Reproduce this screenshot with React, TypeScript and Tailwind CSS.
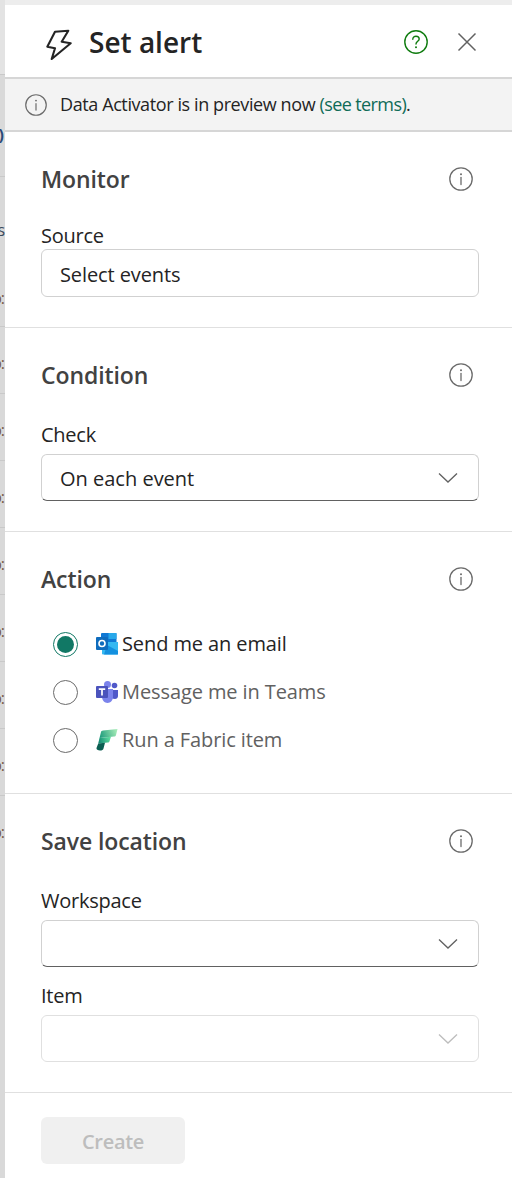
import React from "react";

const font = { fontFamily: '"Open Sans", "Noto Sans", sans-serif' };

function Info({ size = 24, color = "#6b6b6b" }: { size?: number; color?: string }) {
  return (
    <svg width={size} height={size} viewBox="0 0 24 24" fill="none">
      <circle cx="12" cy="12" r="11.2" stroke={color} strokeWidth="1.3" />
      <circle cx="12" cy="7.2" r="1" fill={color} />
      <path d="M12 10.5V17.5" stroke={color} strokeWidth="1.3" strokeLinecap="round" />
    </svg>
  );
}

function Chevron({ color = "#616161" }: { color?: string }) {
  return (
    <svg width="20" height="12" viewBox="0 0 20 12" fill="none">
      <path d="M1 1.5L10 10L19 1.5" stroke={color} strokeWidth="1.3" />
    </svg>
  );
}

function Bolt() {
  return (
    <svg width="28" height="36" viewBox="0 0 28 36" fill="none">
      <path
        d="M10 7.7L23.3 6.7L16.7 17.7L25.7 19.3L6.7 35L10 24.3L2.3 22.7Z"
        stroke="#242424"
        strokeWidth="2.1"
        strokeLinejoin="round"
      />
    </svg>
  );
}

function Outlook() {
  return (
    <svg width="22" height="22" viewBox="0 0 22 22" fill="none">
      <rect x="5" y="0" width="15.5" height="12" rx="1" fill="#0F78D4" />
      <rect x="12.5" y="0" width="8" height="6" fill="#28A8EA" />
      <path d="M6 9H22V20.5C22 21 21.5 21.5 21 21.5H7C6.5 21.5 6 21 6 20.5Z" fill="#35B8F1" />
      <path d="M11 12L22 18V21.5H8Z" fill="#1490DF" />
      <rect x="0" y="4" width="12" height="13" rx="1" fill="#0F6CBD" />
      <circle cx="6" cy="10.5" r="3" stroke="white" strokeWidth="1.6" />
    </svg>
  );
}

function Teams() {
  return (
    <svg width="22" height="22" viewBox="0 0 22 22" fill="none">
      <circle cx="18.5" cy="4.5" r="2.8" fill="#5059C9" />
      <path d="M14 9H22V15C22 17 20.5 18 19 18C16.5 18 14 17 14 15Z" fill="#5059C9" />
      <circle cx="11.5" cy="3.5" r="3.5" fill="#7B83EB" />
      <path d="M6 8H17V16C17 19 14.5 22 11.5 22C8.5 22 6 19 6 16Z" fill="#7B83EB" />
      <rect x="0" y="5" width="12" height="12" rx="1" fill="#4B53BC" />
      <path d="M2.8 8.2H9.2M6 8.2V14.5" stroke="white" strokeWidth="1.7" />
    </svg>
  );
}

function Fabric() {
  return (
    <svg width="22" height="22" viewBox="0 0 22 22" fill="none">
      <defs>
        <linearGradient id="fa" x1="4" y1="8" x2="21" y2="1" gradientUnits="userSpaceOnUse">
          <stop stopColor="#1E9C7C" />
          <stop offset="1" stopColor="#A8EDB8" />
        </linearGradient>
        <linearGradient id="fb" x1="3" y1="13" x2="14" y2="9" gradientUnits="userSpaceOnUse">
          <stop stopColor="#148C74" />
          <stop offset="1" stopColor="#5FDDA0" />
        </linearGradient>
      </defs>
      <path d="M5 3C5.3 2 6 1.6 7 1.5L21.5 0L20 6C19.8 7 19 7.5 18 7.6L3.5 9Z" fill="url(#fa)" />
      <path d="M3.5 9L15 7.7L13.6 12C13.3 13 12.6 13.5 11.6 13.6L2.2 14.5Z" fill="url(#fb)" />
      <path d="M2.2 14.5L9 13.8L7.5 19.5C7.2 21 5.5 21.6 4 21.5C2 21.4 0 20.5 0.5 19Z" fill="#0B5F52" />
    </svg>
  );
}

function Frag() {
  return <span className="mr-[1px] text-[16px] leading-[20px] tracking-[-1px] text-[#7a5a45] whitespace-nowrap">o:</span>;
}

function Strip() {
  return (
    <div className="w-[5px] shrink-0 bg-[#d9d9d9] h-[1178px] overflow-hidden flex flex-col">
      <div className="h-[75px] shrink-0 border-b border-[#c9c9c9] bg-[#e3e3e3]" />
      <div className="h-[102px] shrink-0 border-b border-[#c9c9c9] pt-[50px] flex justify-end">
        <span className="text-[16px] leading-[20px] font-bold text-[#2b4a78] mr-[1px]">)</span>
      </div>
      <div className="h-[150px] shrink-0 border-b border-[#c9c9c9] flex flex-col items-end">
        <span className="mt-[43px] text-[16px] leading-[20px] text-[#3c4a5c]">s</span>
        <span className="mt-[46px]">
          <Frag />
        </span>
      </div>
      {[0, 1, 2, 3, 4, 5, 6].map((i) => (
        <div
          key={i}
          className="h-[67px] shrink-0 border-b border-[#c9c9c9] flex justify-end pt-[26px] overflow-hidden"
        >
          <Frag />
        </div>
      ))}
      <div className="h-[50px] shrink-0 flex justify-end pt-[26px]">
        <Frag />
      </div>
    </div>
  );
}

function SectionHead({ title }: { title: string }) {
  return (
    <div className="flex items-center justify-between h-[24px]">
      <h2 className="text-[23px] leading-[24px] font-semibold text-[#424242] tracking-[-0.1px]">{title}</h2>
      <div className="mr-[6px]">
        <Info />
      </div>
    </div>
  );
}

function Radio({ checked, icon, label }: { checked?: boolean; icon: React.ReactNode; label: string }) {
  return (
    <div className="flex items-center h-[48px] pl-[12px]">
      <div
        className={
          "w-[25px] h-[25px] rounded-full border flex items-center justify-center shrink-0 " +
          (checked ? "border-[#117865]" : "border-[#6b6b6b]")
        }
      >
        {checked && <div className="w-[17px] h-[17px] rounded-full bg-[#117865]" />}
      </div>
      <div className="ml-[18px] w-[22px] h-[22px] shrink-0">{icon}</div>
      <span className={"ml-[4px] text-[20px] tracking-[-0.1px] " + (checked ? "text-[#242424]" : "text-[#616161]")}>
        {label}
      </span>
    </div>
  );
}

function Help() {
  return (
    <svg width="24" height="24" viewBox="0 0 24 24" fill="none">
      <circle cx="12" cy="12" r="11.2" stroke="#107C10" strokeWidth="1.4" />
      <path
        d="M8.8 9.2C8.8 7.4 10.2 6.2 12 6.2C13.8 6.2 15.2 7.4 15.2 9C15.2 11.2 12 11.4 12 14"
        stroke="#107C10"
        strokeWidth="1.4"
        strokeLinecap="round"
      />
      <circle cx="12" cy="17.2" r="1" fill="#107C10" />
    </svg>
  );
}

export default function App() {
  return (
    <div className="w-[512px] h-[1178px] flex overflow-hidden bg-white text-[#242424]" style={font}>
      <Strip />
      <div className="flex-1 min-w-0 flex flex-col">
        <div className="h-[5px] bg-[#ededed]" />
        <header className="h-[72px] flex items-center pl-[40px] pr-[35px] pt-[2px]">
          <Bolt />
          <h1 className="ml-[16px] text-[28px] leading-[36px] font-semibold text-[#242424] flex-1">Set alert</h1>
          <div className="mr-[29px]">
            <Help />
          </div>
          <svg width="20" height="20" viewBox="0 0 20 20" fill="none">
            <path d="M1.5 1.5L18.5 18.5M18.5 1.5L1.5 18.5" stroke="#616161" strokeWidth="1.5" />
          </svg>
        </header>
        <div className="h-[55px] bg-[#f3f3f3] border-y-2 border-t-[#d6d6d6] border-b-[#d6d6d6] flex items-center pl-[20px] text-[18px] tracking-[-0.4px]">
          <Info size={22} />
          <span className="ml-[13px]">
            Data Activator is in preview now{" "}
            <span className="text-[#0e6b57] tracking-[-0.6px]">(see terms)</span>.
          </span>
        </div>

        <section className="h-[196px] border-b border-[#e0e0e0] pl-[36px] pr-[33px] pt-[35px]">
          <SectionHead title="Monitor" />
          <div className="mt-[32px] text-[20px] leading-[26px] tracking-[-0.25px]">Source</div>
          <div className="h-[48px] rounded-[6px] border border-[#d1d1d1] flex items-center pl-[18px] pt-[3px] text-[20px] tracking-[-0.1px]">
            Select events
          </div>
        </section>

        <section className="h-[204px] border-b border-[#e0e0e0] pl-[36px] pr-[33px] pt-[35px]">
          <SectionHead title="Condition" />
          <div className="mt-[35px] text-[20px] leading-[26px] tracking-[-0.25px]">Check</div>
          <div className="mt-[6px] h-[47px] rounded-[6px] border border-[#d1d1d1] border-b-[#616161] flex items-center justify-between pl-[18px] pr-[20px] text-[20px]">
            <span className="pt-[2px]">On each event</span>
            <Chevron />
          </div>
        </section>

        <section className="h-[262px] border-b border-[#e0e0e0] pl-[36px] pr-[33px] pt-[35px]">
          <SectionHead title="Action" />
          <div className="mt-[29px] flex flex-col">
            <Radio checked icon={<Outlook />} label="Send me an email" />
            <Radio icon={<Teams />} label="Message me in Teams" />
            <Radio icon={<Fabric />} label="Run a Fabric item" />
          </div>
        </section>

        <section className="h-[299px] border-b border-[#e0e0e0] pl-[36px] pr-[33px] pt-[35px]">
          <SectionHead title="Save location" />
          <div className="mt-[35px] text-[20px] leading-[26px] tracking-[-0.25px]">Workspace</div>
          <div className="mt-[6px] h-[47px] rounded-[6px] border border-[#d1d1d1] border-b-[#616161] flex items-center justify-end pr-[20px]">
            <Chevron />
          </div>
          <div className="mt-[16px] text-[20px] leading-[26px] tracking-[-0.25px]">Item</div>
          <div className="mt-[6px] h-[47px] rounded-[6px] border border-[#e0e0e0] flex items-center justify-end pr-[20px]">
            <Chevron color="#bdbdbd" />
          </div>
        </section>

        <div className="pl-[36px] pt-[24px]">
          <div className="w-[144px] h-[47px] rounded-[6px] bg-[#f0f0f0] flex items-center justify-center pt-[3px] text-[20px] font-semibold tracking-[-0.3px] text-[#bdbdbd]">
            Create
          </div>
        </div>
      </div>
    </div>
  );
}
